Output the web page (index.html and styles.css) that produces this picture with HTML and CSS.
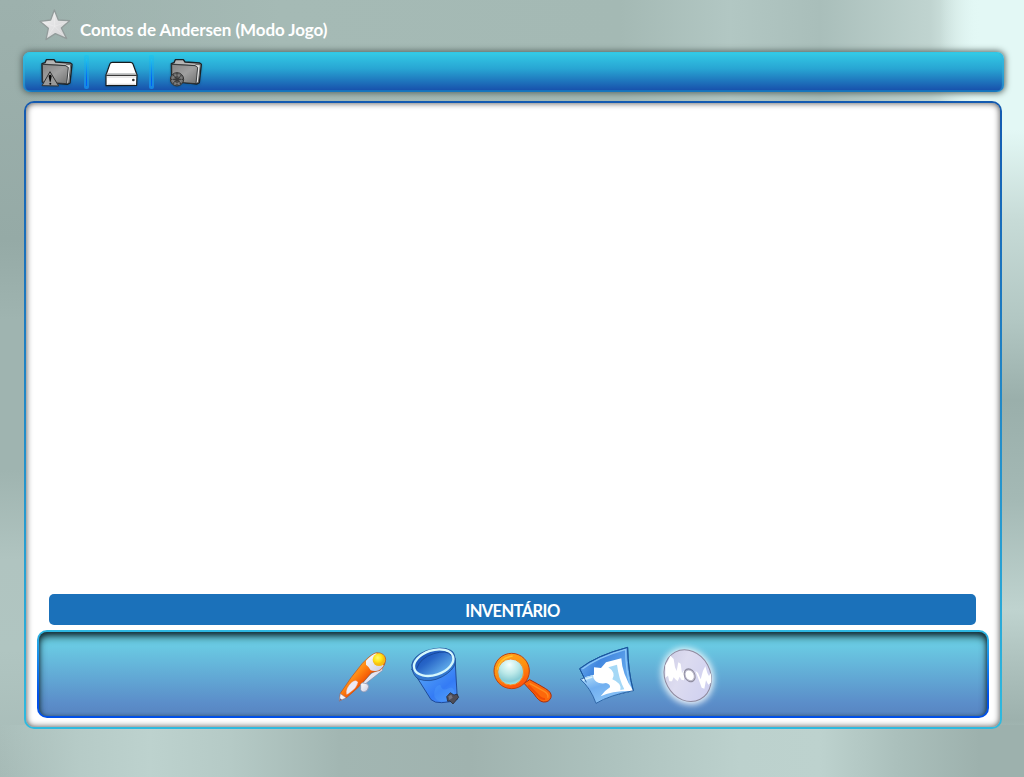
FILE: index.html
```html
<!DOCTYPE html>
<html lang="pt">
<head>
<meta charset="utf-8">
<title>Contos de Andersen</title>
<link rel="stylesheet" href="styles.css">
</head>
<body>
<div class="app">
  <header class="heading">
    <svg class="star" viewBox="114 24 102 99" aria-hidden="true">
      <defs><linearGradient id="silver" x2="1" y2="1"><stop stop-color="#f4f4f4"/><stop offset="1" stop-color="#cfcfd1"/></linearGradient></defs>
      <path d="M163 30L175 60L209 62L184 84L200 116L166 101L138 119L145 85L120 64L152 60Z" fill="url(#silver)" stroke="#929c9b" stroke-width="4" stroke-linejoin="round"/>
      <path d="M163 38L164 79L201 66M164 79L193 109M164 79L144 109M164 79L127 67" fill="none" stroke="#fff" stroke-opacity=".35" stroke-width="2"/>
    </svg>
    <h1 class="title">Contos de Andersen (Modo Jogo)</h1>
  </header>

  <nav class="toolbar">
    <svg class="tool" viewBox="33 24 99 90" aria-hidden="true">
      <defs><linearGradient id="folder" x2="1" y2="1"><stop stop-color="#858585"/><stop offset=".5" stop-color="#a0a0a0"/><stop offset="1" stop-color="#707070"/></linearGradient></defs>
      <path d="M37 96L36 41L45 38L49 29L72 29L77 36L121 39L126 43L120 99L112 103Z" fill="#b5b5b5" stroke="#1b2023" stroke-width="4" stroke-linejoin="round"/>
      <path d="M37 42L107 47L109 44L122 44L116 98L111 101Z" fill="#e5e5e5" stroke="#333" stroke-width="2"/>
      <path d="M37 43L106 47L115 52L110 101L38 96Z" fill="url(#folder)" stroke="#24282a" stroke-width="2.5"/>
      <path d="M60 65L36 107L86 108Z" fill="#999" stroke="#333" stroke-width="3" stroke-linejoin="round"/>
      <path d="M56 78Q60 71 65 78L62 95L59 95Z" fill="#080808"/><circle cx="61" cy="101" r="3" fill="#080808"/>
    </svg>
    <span class="separator separator-first"></span>
    <svg class="tool" viewBox="315 174 99 90" aria-hidden="true">
      <path d="M318 225L330 191Q331 187 337 187L391 187Q397 187 399 192L411 225L410 256L318 257Z" fill="#fff" stroke="#171b1d" stroke-width="3.5" stroke-linejoin="round"/>
      <path d="M321 219L408 219L409 224L320 224Z" fill="#c8cbcc"/>
      <path d="M319 226H410" stroke="#111" stroke-width="3"/><path d="M321 231H408" stroke="#bbb" stroke-width="2"/><path d="M323 253H406" stroke="#ddd" stroke-width="4"/>
      <circle cx="400" cy="240" r="4" fill="#333"/>
    </svg>
    <span class="separator separator-second"></span>
    <svg class="tool" viewBox="120 24 99 90" aria-hidden="true">
      <path d="M125 93L124 41L132 38L136 29L160 29L165 36L209 39L214 43L208 98L201 102Z" fill="#b5b5b5" stroke="#1b2023" stroke-width="4" stroke-linejoin="round"/>
      <path d="M125 42L195 47L197 44L211 44L205 97L199 100Z" fill="#e5e5e5" stroke="#333" stroke-width="2"/>
      <path d="M125 43L195 47L203 52L198 101L126 95Z" fill="url(#folder)" stroke="#24282a" stroke-width="2.5"/>
      <circle cx="141" cy="88" r="20" fill="#707070" stroke="#333" stroke-width="3"/>
      <path d="M129 74L153 102M154 76L129 101M141 69V106M122 88H160" stroke="#3a3a3a" stroke-width="3.5"/>
      <circle cx="141" cy="88" r="13" fill="none" stroke="#aaa" stroke-opacity=".4" stroke-width="3"/>
    </svg>
  </nav>

  <main class="stage">
    <div class="scene"></div>
    <h2 class="inventory-title">INVENTÁRIO</h2>
    <section class="inventory">
      <svg class="item" viewBox="-15 30 246 186" aria-hidden="true">
        <defs>
          <linearGradient id="orange" x1=".3" y1=".3" x2=".7" y2=".7"><stop stop-color="#ffa72a"/><stop offset=".3" stop-color="#ff8712"/><stop offset=".6" stop-color="#f65d06"/><stop offset="1" stop-color="#d83e04"/></linearGradient>
          <radialGradient id="gold" cx=".4" cy=".35"><stop stop-color="#fffa72"/><stop offset=".65" stop-color="#ffe313"/><stop offset="1" stop-color="#f6bd12"/></radialGradient>
          <linearGradient id="white" x2="1" y2="1"><stop stop-color="#fff"/><stop offset="1" stop-color="#c9cbe1"/></linearGradient>
        </defs>
        <path d="M165 96L172 98L173 106L132 138L118 149L114 143L135 119Z" fill="url(#white)" stroke="#8588a7" stroke-width="2"/>
        <path d="M43 198L46 175Q78 125 112 85Q137 58 154 53Q179 52 182 73Q181 93 165 106L139 113Q102 159 66 187Z" fill="url(#orange)" stroke="#b65620" stroke-width="2"/>
        <path d="M123 77Q142 58 154 55L176 92Q166 105 157 107Q145 109 137 106Q131 94 123 89Z" fill="url(#white)"/>
        <circle cx="162" cy="74" r="19" fill="url(#gold)"/>
        <path d="M43 198L46 176L63 188Z" fill="#f4f4fa" stroke="#858bae" stroke-width="1.5"/><path d="M43 199L45 190L51 194Z" fill="#6f6077"/>
        <path d="M64 178Q60 161 80 142Q93 131 99 142Q96 159 76 172Q68 180 64 178Z" fill="#eceaf5" stroke="#ed7d45" stroke-width="1"/>
        <path d="M107 148Q109 141 120 145Q130 145 131 155Q129 169 117 171Q105 169 107 159Z" fill="url(#white)" stroke="#868ba9" stroke-width="2"/>
      </svg>
      <svg class="item" viewBox="231 30 246 186" aria-hidden="true">
        <defs>
          <linearGradient id="bucket" x2=".8" y2="1"><stop stop-color="#246ed5"/><stop offset=".4" stop-color="#4c99f6"/><stop offset=".75" stop-color="#347bf5"/><stop offset="1" stop-color="#478ff9"/></linearGradient>
          <linearGradient id="mouth" x2=".6" y2="1"><stop stop-color="#164db6"/><stop offset=".45" stop-color="#2765c7"/><stop offset="1" stop-color="#5faaea"/></linearGradient>
        </defs>
        <path d="M260 102L318 194Q329 204 350 203Q378 202 397 193L390 69Z" fill="url(#bucket)" stroke="#173d88" stroke-width="2.5"/>
        <path d="M328 185Q325 151 346 149Q351 170 371 160Q387 151 389 179Q387 195 364 199Q338 203 328 185Z" fill="#61b6ff" opacity=".22"/>
        <path d="M260 90Q265 62 304 47Q351 32 377 46Q391 51 391 83Q386 106 352 125Q315 145 280 132Q261 120 260 90Z" fill="#3479d0" stroke="#174084" stroke-width="2"/>
        <ellipse cx="326" cy="83" rx="61" ry="37" transform="rotate(-18 326 83)" fill="url(#mouth)" stroke="#d5f7fc" stroke-width="7"/>
        <path d="M275 101Q286 68 326 56Q366 43 379 62" fill="none" stroke="#17499d" stroke-width="3"/>
        <path d="M365 185L376 173L387 180L396 177L401 187L384 207L375 198L368 199Z" fill="#4e4d57" stroke="#202029" stroke-width="2"/><path d="M370 184L379 179L383 188L373 195Z" fill="#747480"/>
      </svg>
      <svg class="item" viewBox="12 30 246 186" aria-hidden="true">
        <defs>
          <radialGradient id="glass" cx=".45" cy=".22" r=".8"><stop stop-color="#f3ffff"/><stop offset=".45" stop-color="#bce9e9"/><stop offset=".8" stop-color="#86cbd4"/><stop offset="1" stop-color="#a7edf0"/></radialGradient>
          <linearGradient id="rim" x2=".4" y2="1"><stop stop-color="#ffa51c"/><stop offset=".55" stop-color="#ff920e"/><stop offset="1" stop-color="#ff570b"/></linearGradient>
        </defs>
        <path d="M132 145L149 134Q172 146 197 161Q217 173 213 187Q208 202 190 201Q176 199 162 177Z" fill="#fd680b" stroke="#a92e0b" stroke-width="3"/>
        <path d="M149 145L194 170Q207 179 203 188" fill="none" stroke="#ff8d20" stroke-width="4"/><path d="M145 151L181 188Q190 193 195 192" fill="none" stroke="#f04c06" stroke-width="6"/>
        <circle cx="95" cy="108" r="53" fill="url(#rim)" stroke="#bd4110" stroke-width="3"/>
        <circle cx="92" cy="111" r="39" fill="url(#glass)" stroke="#f98f21" stroke-width="3"/>
        <path d="M52 104Q59 68 98 63" fill="none" stroke="#ffc32d" stroke-width="4"/>
      </svg>
      <svg class="item" viewBox="258 30 246 186" aria-hidden="true">
        <defs>
          <linearGradient id="photo" x2="1" y2=".6"><stop stop-color="#7fc0f5"/><stop offset=".4" stop-color="#4287df"/><stop offset="1" stop-color="#6aaef0"/></linearGradient>
          <linearGradient id="front" x2=".6" y2="1"><stop stop-color="#b8e2fb"/><stop offset=".45" stop-color="#71aff0"/><stop offset="1" stop-color="#8cc5f7"/></linearGradient>
        </defs>
        <path d="M299 101Q350 61 443 37Q444 107 460 167L394 182L319 142Z" fill="url(#photo)" stroke="#1a559b" stroke-width="3"/>
        <path d="M307 102Q354 66 437 43Q437 107 453 161" fill="none" stroke="#8cc7f7" stroke-width="4"/>
        <path d="M301 133Q320 124 342 119L342 97L363 99L378 82L424 70Q426 118 460 168Q396 178 348 205Q333 160 301 133Z" fill="#fff"/>
        <path d="M385 97L411 89Q416 130 433 163L421 165Q426 145 397 133Q409 113 385 97Z" fill="#a5d8f6"/>
        <path d="M301 133Q320 124 339 120Q340 137 355 143Q368 147 378 144Q392 148 390 157Q372 168 362 184Q395 167 459 168Q390 180 348 205Q333 160 301 133Z" fill="url(#front)"/>
        <path d="M309 135Q322 130 337 126" fill="none" stroke="#d8f2fe" stroke-width="5"/>
        <path d="M319 142L299 101Q350 61 443 37Q444 107 460 167Q390 180 348 205Q332 159 301 133L314 128" fill="none" stroke="#1a559b" stroke-width="2.5"/>
      </svg>
      <svg class="item" viewBox="24 30 246 186" aria-hidden="true">
        <defs>
          <linearGradient id="disc" x2=".7" y2="1"><stop stop-color="#c9c9e2"/><stop offset=".45" stop-color="#dddcf0"/><stop offset="1" stop-color="#cfd0f0"/></linearGradient>
          <filter id="glow" x="-40%" y="-40%" width="180%" height="180%"><feGaussianBlur stdDeviation="9"/></filter>
          <filter id="soft"><feGaussianBlur stdDeviation="2"/></filter>
          <clipPath id="discEdge"><ellipse cx="143" cy="122" rx="68" ry="80" transform="rotate(-28 143 122)"/></clipPath>
        </defs>
        <ellipse cx="143" cy="124" rx="76" ry="87" transform="rotate(-28 143 124)" fill="#fff" opacity=".9" filter="url(#glow)"/>
        <ellipse cx="143" cy="122" rx="68" ry="80" transform="rotate(-28 143 122)" fill="url(#disc)" stroke="#8e899e" stroke-width="3"/>
        <g clip-path="url(#discEdge)">
          <path filter="url(#soft)" d="M76 90L84 78L91 62L101 72L105 97L110 108L115 82L122 86L126 115L133 105L132 136L124 134L119 125L113 139L106 133L101 127L96 139L88 139L84 122L76 128ZM166 107L174 114L182 133L189 107L196 94L202 114L207 123L218 104L218 139L205 149L198 136L193 161L185 158L178 139Z" fill="#fff"/>
        </g>
        <ellipse cx="149" cy="121" rx="17" ry="22" transform="rotate(-28 149 121)" fill="#8e8c9f"/>
        <ellipse cx="149" cy="121" rx="13" ry="17" transform="rotate(-28 149 121)" fill="#fff" stroke="#bbb9ca" stroke-width="3"/>
      </svg>
    </section>
  </main>
</div>
</body>
</html>
```
FILE: styles.css
```css
* { box-sizing: border-box; }
body {
  margin: 0;
  font-family: Lato, "Open Sans", sans-serif;
  color: #fff;
}
.app {
  height: 777px;
  padding: 9px 20px 48px 23px;
  overflow: hidden;
  display: flex;
  flex-direction: column;
  background:
    linear-gradient(90deg, transparent 940px, #e3f8f5 980px) 0 0 / 100% 130px no-repeat,
    linear-gradient(#e3f8f5 130px, #c7dbd7 220px, #b2c7c3 320px, #9aafab 400px, #a4b9b5 500px, #bfd3cf 610px, #adc1bd 665px, #9db1ad 720px, transparent 740px) 100% 0 / 26px 100% no-repeat,
    linear-gradient(90deg, transparent, #b6cbc7 80px, #bdd2ce 150px, #b5cac6 230px, #a2b6b2 340px, #a0b3af 470px, #abc0bc 590px, #bcd1cd 740px, #bdd2ce 820px, #aabfbb 900px, #9db1ad 980px) 0 100% / 100% 52px no-repeat,
    linear-gradient(90deg, transparent 20px, #a5bab5 280px, #a4b9b4 620px, #b2c7c3 730px, #a9beba 820px, #c0d4d0 930px, #e3f8f5 980px) 0 0 / 100% 102px no-repeat,
    linear-gradient(#9db1ad, #9bafab 80px, #95aaa6 240px, #9fb4b0 320px, #9fb4b0 470px, #b0c4c0 560px, #b0c5c1 650px, #a6bab6 777px);
}
.heading { display: flex; height: 43px; padding-left: 15px; }
.star { width: 34px; height: 33px; flex: none; margin-top: -1px; }
.title {
  margin: 9px 0 0 8px;
  font-size: 17px;
  line-height: 23px;
  font-weight: 700;
  letter-spacing: -.08px;
  white-space: nowrap;
}
.toolbar {
  height: 40px;
  flex: none;
  display: flex;
  align-items: flex-start;
  padding: 3px 0 0 18px;
  border-radius: 7px;
  background: linear-gradient(#34cce7, #28a5d3 42%, #1854ad 94%, #1671bc 95%);
  box-shadow: 0 0 6px 1px #53625f, inset 2px 0 1px #34b4dd88, inset -2px 0 1px #34b4dd88;
}
.tool { width: 33px; height: 30px; flex: none; margin-top: 3px; filter: drop-shadow(0 1px 1px #0b4a7b88); }
.separator {
  width: 5px;
  height: 34px;
  border-radius: 2px;
  background: linear-gradient(#1fc4ee, #0060f5 75%) 50% 4px / 1px 27px no-repeat, linear-gradient(#25c4ea, #1b96dc 60%, #1684e4);
}
.separator-first { margin: 0 16px 0 10px; }
.separator-second { margin: 0 16px 0 11px; }
.stage {
  height: 628px;
  flex: none;
  margin: 9px 2px 0 1px;
  padding: 0 11px 9px;
  border: 2px solid transparent;
  border-radius: 10px;
  display: flex;
  flex-direction: column;
  background:
    linear-gradient(#fff, #fff) padding-box,
    linear-gradient(#145ab0, #2fbadf) border-box;
  position: relative;
}
.stage::after {
  content: "";
  position: absolute;
  inset: 0;
  border-radius: 8px;
  box-shadow: inset 0 0 6px #444;
  pointer-events: none;
}
.scene { flex: 1; }
.inventory-title {
  flex: none;
  height: 31px;
  margin: 0 13px 5px 12px;
  border-radius: 5px;
  background: #1b71ba;
  text-align: center;
  font-size: 16.5px;
  line-height: 35px;
  letter-spacing: -.6px;
}
.inventory {
  height: 88px;
  flex: none;
  padding: 13px 0 0 24px;
  display: flex;
  justify-content: center;
  align-items: flex-start;
  border: 2px solid transparent;
  border-radius: 10px;
  background:
    linear-gradient(#6bcfe5 10%, #5b8dc9 85%, #5785c1) padding-box,
    linear-gradient(#2eb8e0, #1687ed 35%, #0050e8 75%) border-box;
  position: relative;
}
.inventory::before {
  content: "";
  position: absolute;
  inset: 0;
  border-radius: 8px;
  box-shadow: inset 0 5px 8px -1px #122c34, inset 0 1px 4px #244650;
}
.item { width: 82px; height: 62px; flex: none; position: relative; overflow: visible; }
```
